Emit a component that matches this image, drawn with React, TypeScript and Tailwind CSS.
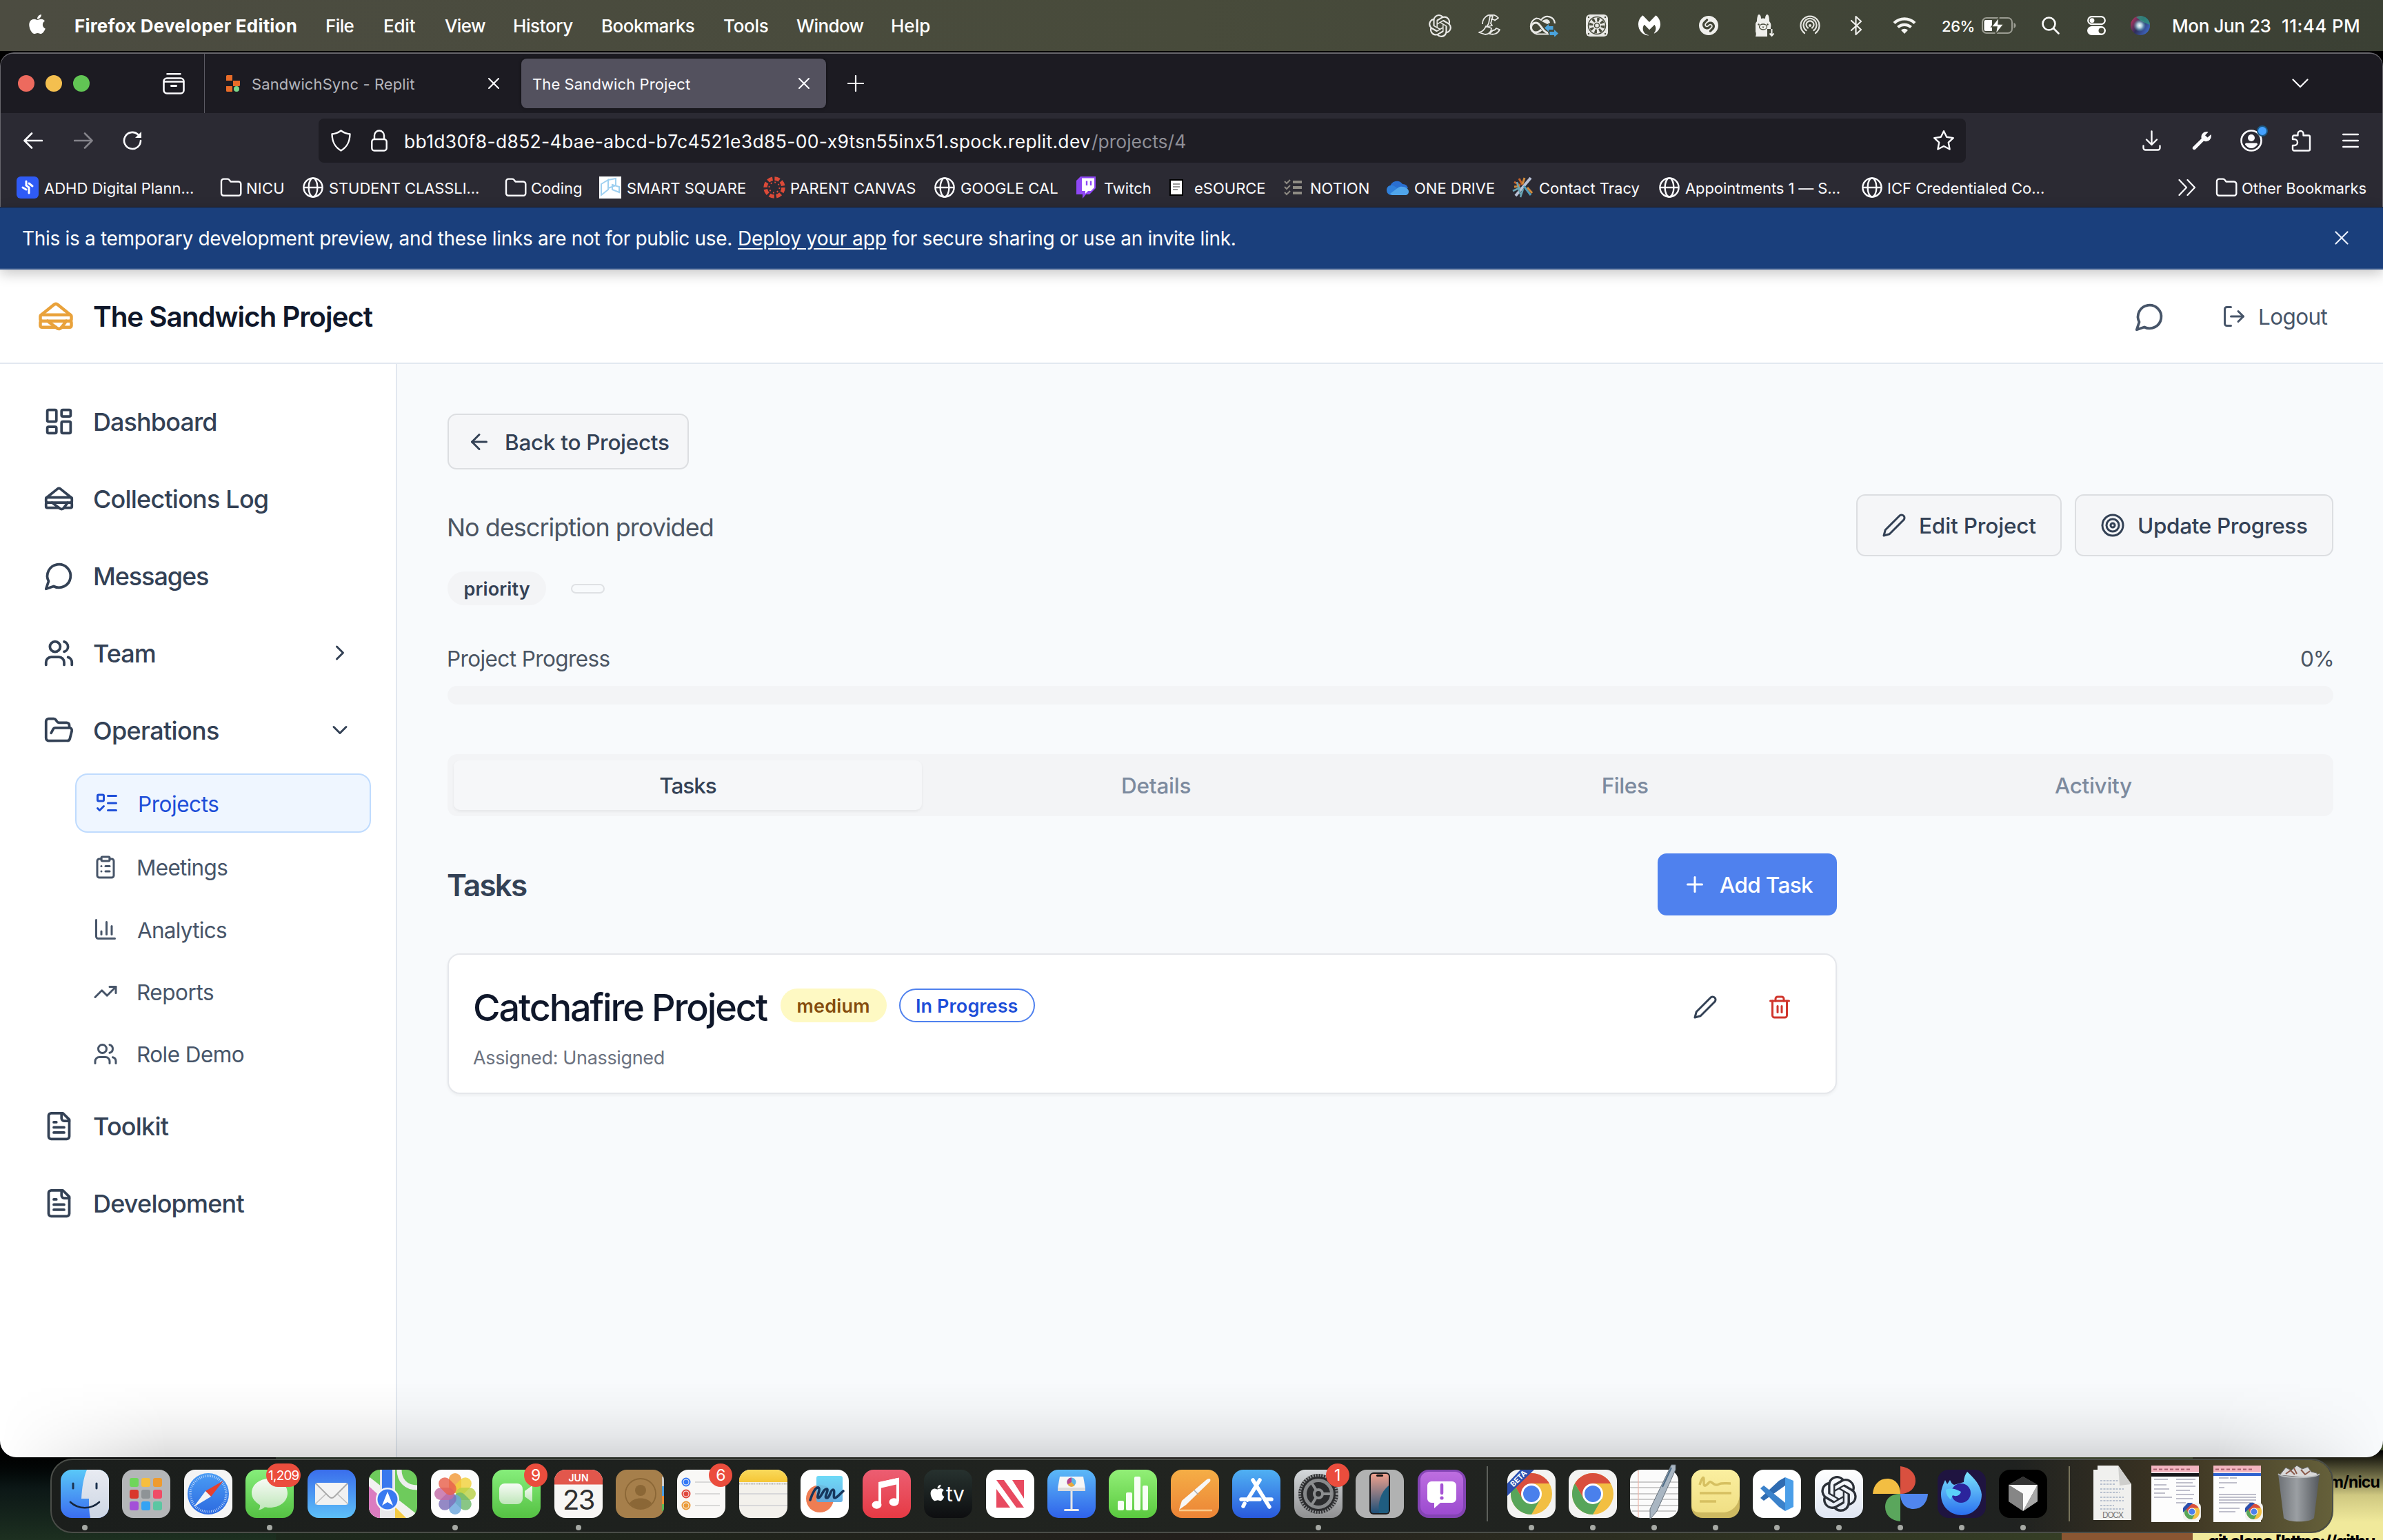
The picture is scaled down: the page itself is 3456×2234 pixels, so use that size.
import { type ReactNode } from "react";
import {
  ArrowLeft, ChartColumn, ChevronDown, ChevronRight, ClipboardList, FolderOpen, LayoutDashboard, ListTodo,
  LogOut, Plus, Sandwich, Target, Trash2, TrendingUp, Users, X,
} from "lucide-react";
import { SiMalwarebytes, SiOpenai, SiShazam } from "react-icons/si";
import { FaApple } from "react-icons/fa";

function T({ className, children }: { className: string; children: ReactNode }) {
  return <span className={"block shrink-0 whitespace-nowrap pt-0.5 leading-none " + className}>{children}</span>;
}

function Globe({ className = "" }: { className?: string }) {
  return (
    <svg className={"size-8 shrink-0 " + className} viewBox="0 0 32 32" fill="none" stroke="#fbfbfe" strokeWidth="2.4">
      <circle cx="16" cy="16" r="13.6" />
      <ellipse cx="16" cy="16" rx="6.4" ry="13.6" />
      <path d="M3 16h26" />
    </svg>
  );
}
function Folder({ className = "" }: { className?: string }) {
  return (
    <svg className={"size-8 shrink-0 " + className} viewBox="0 0 32 32" fill="none" stroke="#fbfbfe" strokeWidth="2.4" strokeLinejoin="round">
      <path d="M2 24V7a3.400 3.400 0 0 1 3.400-3.400h5.600c1.300 0 2 .6 2.800 1.700L15.500 7.500H27A3.400 3.400 0 0 1 30.300 11v13.500a3.200 3.200 0 0 1-3.300 3.200H5.300A3.300 3.300 0 0 1 2 24z" />
    </svg>
  );
}
function Stroke({ className = "", children }: { className?: string; children: ReactNode }) {
  return (
    <svg className={"shrink-0 " + className} viewBox="0 0 24 24" fill="none" stroke="currentColor" strokeWidth="2" strokeLinecap="round" strokeLinejoin="round">
      {children}
    </svg>
  );
}
function FileText({ className = "" }: { className?: string }) {
  return (
    <Stroke className={className}>
      <path d="M15 2H6a2 2 0 0 0-2 2v16a2 2 0 0 0 2 2h12a2 2 0 0 0 2-2V7Z" />
      <path d="M14 2v4a2 2 0 0 0 2 2h4M10 9H8M16 13H8M16 17H8" />
    </Stroke>
  );
}
function Pen({ className = "" }: { className?: string }) {
  return <Stroke className={className}><path d="M17 3a2.850 2.830 0 1 1 4 4L7.500 20.500 2 22l1.500-5.500Z" /></Stroke>;
}
function Bubble({ className = "" }: { className?: string }) {
  return <Stroke className={className}><path d="M7.900 20A9 9 0 1 0 4 16.100L2 22Z" /></Stroke>;
}

function MenuBar() {
  return (
    <div className="flex h-[74px] shrink-0 items-center bg-linear-to-r from-[#4c4c41] via-[#484b3b] to-[#3b4034] pl-[41px] text-[26px] font-medium text-white">
      <FaApple className="mb-1 h-8 w-[26px] shrink-0" />
      <T className="ml-[41px] w-[322px] font-bold tracking-[0.2px]">Firefox Developer Edition</T>
      <T className="ml-[42px] w-[41px] tracking-[-0.6px]">File</T>
      <T className="ml-[43px] w-[46px] tracking-[-0.2px]">Edit</T>
      <T className="ml-[43px] w-[57px] tracking-[-0.6px]">View</T>
      <T className="ml-[42px] w-[86px] tracking-[-0.4px]">History</T>
      <T className="ml-[42px] w-[134px] tracking-[-0.5px]">Bookmarks</T>
      <T className="ml-[43px] w-[63px] tracking-[-0.3px]">Tools</T>
      <T className="ml-[43px] w-[95px] tracking-[-0.6px]">Window</T>
      <T className="ml-[42px] w-[56px]">Help</T>
      <SiOpenai className="ml-[724px] size-[33px] shrink-0 text-[#e9e9e6]" />
      <svg className="ml-[39px] size-8 shrink-0" viewBox="0 0 32 32" fill="none" stroke="#e9e9e6" strokeWidth="1.800" strokeLinejoin="round">
        <path d="M6 14A13 13 0 0 1 29 5l-5 3.500a7.500 7.500 0 0 0-6-1.500M31 22c-3 6-9 8-15 6l5-5c2 0 4-1 5-3zM17 2h4l-3 11 2 3-8 2 3-5zM11 17l8 3c0 5-4 9-9 9l-9-3c5-1 8-4 10-9z" />
      </svg>
      <svg className="ml-10 h-8 w-[44px] shrink-0" viewBox="0 0 44 32" fill="none" stroke="#e9e9e6" strokeWidth="2.200">
        <path d="M30 28.500H13A12 12 0 0 1 12 5.500c3 0 5 .8 7 2.500C26-1 38 3 39 13" />
        <path d="M29 27c-5-1-7-5-10-9s-4-6-7.500-6a6.800 6.800 0 0 0 0 14c4 0 6-2 8-4" strokeWidth="3" />
        <path d="M20 10c6-5 11-3 12 2l-4 2z" fill="#e9e9e6" stroke="none" />
        <path d="M24 19.500l6-5.500v3h6.500v5H30v3zM44 27.500l-6-5.500v3h-6.500v5H38v3z" fill="#4aa3dc" stroke="none" />
      </svg>
      <svg className="ml-10 size-8 shrink-0" viewBox="0 0 32 32">
        <rect width="32" height="32" rx="6" fill="#e9e9e6" />
        <circle cx="16" cy="16" r="12.500" fill="none" stroke="#474a3b" strokeWidth="1.500" />
        <circle cx="16" cy="16" r="8.500" fill="none" stroke="#474a3b" strokeWidth="5.500" strokeDasharray="3.200 3.475" />
        <circle cx="16" cy="16" r="3.500" fill="none" stroke="#474a3b" strokeWidth="1.500" />
        <g fill="#474a3b"><circle cx="4" cy="4" r="1.200" /><circle cx="28" cy="4" r="1.200" /><circle cx="4" cy="28" r="1.200" /><circle cx="28" cy="28" r="1.200" /></g>
      </svg>
      <SiMalwarebytes className="ml-[44px] size-8 shrink-0" />
      <SiShazam className="ml-[56px] size-7 shrink-0 text-[#efefec]" />
      <svg className="ml-[54px] h-8 w-7 shrink-0" viewBox="0 0 28 32">
        <path d="M0 32c1-3 1-5 0-7-1-2-1-4 0-6-1-4 0-7 2-9C2 5 3 0 5 0s3 3 3 6c2-.8 4-.8 6 0 0-3 1-6 3-6s3 5 3 10c2 2 3 5 2 9v2h-5v11z" fill="#efefec" />
        <ellipse cx="11" cy="18" rx="5.500" ry="4" fill="none" stroke="#474a3b" strokeWidth="1.300" />
        <circle cx="4.500" cy="14.500" r="1.200" fill="#474a3b" /><circle cx="17.500" cy="14.500" r="1.200" fill="#474a3b" /><path d="M9.800 17.500l1.200 1 1.200-1M11 18.500v1.500" stroke="#474a3b" fill="none" />
        <path d="M23.500 21v10M20.500 27.500l3 3.500 3-3.500" fill="none" stroke="#efefec" strokeWidth="2" />
      </svg>
      <svg className="ml-9 h-[30px] w-[30px] shrink-0" viewBox="0 0 30 30" fill="none" stroke="#e4e4df" strokeWidth="2.200" strokeLinecap="round">
        <path d="M7 26A13.500 13.500 0 1 1 23 26M9.500 22A9.500 9.500 0 1 1 20.500 22M12 18.500a5.500 5.500 0 1 1 6 0" />
        <circle cx="15" cy="15" r="2" fill="#e4e4df" stroke="none" />
      </svg>
      <svg className="ml-[43px] h-[30px] w-[18px] shrink-0" viewBox="0 0 18 30" fill="none" stroke="#efefec" strokeWidth="2.200" strokeLinejoin="round" strokeLinecap="round">
        <path d="M2 8l14 13-7.500 7V2L16 9 2 22" />
      </svg>
      <svg className="ml-[44px] h-[26px] w-[34px] shrink-0" viewBox="0 0 34 26" fill="none" stroke="#f4f4f1" strokeWidth="4.200">
        <path d="M2 9.500a21.500 21.500 0 0 1 30 0M7.500 15.500a14 14 0 0 1 19 0" />
        <path d="M17 25l-5-5.300a7.300 7.300 0 0 1 10 0z" fill="#f4f4f1" stroke="none" />
      </svg>
      <T className="ml-[37px] w-[47px] text-[22px] tracking-[-0.4px]">26%</T>
      <svg className="ml-[11px] h-6 w-[50px] shrink-0" viewBox="0 0 50 24">
        <rect x="1" y="1" width="43" height="22" rx="6" fill="none" stroke="#9b9c92" strokeWidth="2" />
        <path d="M46.500 8v8c2-.8 3-2.200 3-4s-1-3.200-3-4z" fill="#9b9c92" />
        <path d="M6 4h9v16H6a2.500 2.500 0 0 1-2.500-2.500v-11A2.500 2.500 0 0 1 6 4z" fill="#fff" />
        <path d="M25 0L14 14h8l-2 11 12-15h-8z" fill="#fff" stroke="#464a3a" strokeWidth="1.500" />
      </svg>
      <svg className="ml-[37px] h-[26px] w-[26px] shrink-0" viewBox="0 0 26 26" fill="none" stroke="#fff" strokeWidth="2.600" strokeLinecap="round">
        <circle cx="10.500" cy="10.500" r="9" /><path d="M17.500 17.500l7 7" />
      </svg>
      <svg className="ml-10 h-[28px] w-[27px] shrink-0" viewBox="0 0 27 28">
        <rect x="1.200" y="1.200" width="24.600" height="11" rx="5.500" fill="none" stroke="#fff" strokeWidth="2.200" /><circle cx="7" cy="6.700" r="3.400" fill="#fff" />
        <rect y="15" width="27" height="13" rx="6.500" fill="#fff" /><circle cx="20.500" cy="21.500" r="4" fill="#454839" />
      </svg>
      <svg className="ml-9 size-7 shrink-0" viewBox="0 0 28 28">
        <defs>
          <linearGradient id="siri" x1="0" y1="0.200" x2="1" y2="0.800"><stop offset="0" stopColor="#b8345e" /><stop offset="0.450" stopColor="#2f2f5c" /><stop offset="1" stopColor="#3f6fd0" /></linearGradient>
          <radialGradient id="siriglow"><stop offset="0" stopColor="#fff" /><stop offset="0.400" stopColor="#bfe3ee" stopOpacity="0.850" /><stop offset="1" stopColor="#58b8c0" stopOpacity="0" /></radialGradient>
        </defs>
        <circle cx="14" cy="14" r="14" fill="url(#siri)" /><path d="M14 0a14 14 0 0 1 14 13C22 11 15 8 8 2a14 14 0 0 1 6-2z" fill="#2f9a80" fillOpacity="0.750" /><circle cx="13" cy="14" r="9" fill="url(#siriglow)" />
      </svg>
      <T className="ml-[32px] w-[143px] tracking-[-0.4px]">Mon Jun 23</T>
      <T className="ml-[16px] w-[113px] tracking-[0.400px]">11:44 PM</T>
    </div>
  );
}

function TabBar() {
  return (
    <div className="flex h-[86px] items-center bg-[#1c1b22] pl-[25px] text-[22px] text-[#fbfbfe]">
      <span className="size-6 rounded-full bg-[#ed6a5e]" />
      <span className="ml-4 size-6 rounded-full bg-[#f4bf4f]" />
      <span className="ml-4 size-6 rounded-full bg-[#61c554]" />
      <svg className="ml-[106px] h-8 w-8" viewBox="0 0 32 32" fill="none" stroke="#fbfbfe" strokeWidth="2.600" strokeLinecap="round">
        <rect x="1.500" y="8.500" width="29" height="22" rx="4.500" /><path d="M2 13.500h28M6.500 2.200h19" /><path d="M12.500 19.500h7" strokeWidth="3" />
      </svg>
      <span className="ml-7 h-[86px] w-px bg-[#5b5a63]" />
      <svg className="ml-[31px] h-6 w-5 shrink-0" viewBox="0 0 20 24">
        <path d="M0 1.500A1.500 1.500 0 0 1 1.500 0H9v8H0zM10 8h10v6.500A1.500 1.500 0 0 1 18.500 16H10zM0 16h9v8H1.500A1.500 1.500 0 0 1 0 22.500z" fill="#e96c28" />
        <circle cx="15" cy="20" r="4" fill="#7bd88a" />
      </svg>
      <T className="ml-[17px] w-[235px] tracking-[0.100px] text-[#b5b5bb]">SandwichSync - Replit</T>
      <X className="ml-[102px] size-[28px] shrink-0" strokeWidth={1.800} />
      <div className="ml-[26px] flex h-[72px] w-[442px] shrink-0 items-center rounded-lg bg-[#53515e] pr-[18px] pl-[16px] shadow-[0_0_4px_rgba(0,0,0,0.5)]">
        <T className="mr-auto w-[228px] tracking-[0.100px]">The Sandwich Project</T>
        <X className="size-[28px]" strokeWidth={1.800} />
      </div>
      <svg className="ml-[31px] size-6 shrink-0" viewBox="0 0 24 24" stroke="#fbfbfe" strokeWidth="2.200" strokeLinecap="round"><path d="M12 1v22M1 12h22" /></svg>
      <svg className="mr-[107px] ml-auto h-[14px] w-6" viewBox="0 0 24 14" fill="none" stroke="#fbfbfe" strokeWidth="2.200" strokeLinecap="round" strokeLinejoin="round"><path d="M1.500 1.500L12 12 22.500 1.500" /></svg>
    </div>
  );
}

function NavBar() {
  return (
    <div className="flex h-[80px] items-center text-[26.500px] text-[#fbfbfe]">
      <svg className="ml-[33px] h-6 w-7 shrink-0" viewBox="0 0 28 24" fill="none" stroke="#fbfbfe" strokeWidth="2.600" strokeLinecap="round" strokeLinejoin="round"><path d="M27 12H2M12 1.500L1.500 12 12 22.500" /></svg>
      <svg className="ml-[45px] h-6 w-7 shrink-0" viewBox="0 0 28 24" fill="none" stroke="#84838a" strokeWidth="2.600" strokeLinecap="round" strokeLinejoin="round"><path d="M1 12h25M16 1.500L26.500 12 16 22.500" /></svg>
      <svg className="ml-[43px] h-7 w-7 shrink-0" viewBox="0 0 28 28" fill="none" stroke="#fbfbfe" strokeWidth="2.600" strokeLinecap="round"><path d="M26 14a12 12 0 1 1-4-9l2 2" /><path d="M27 1v9h-9z" fill="#fbfbfe" stroke="none" /></svg>
      <div className="ml-[256px] flex h-16 w-[2389px] shrink-0 items-center rounded-lg bg-[#1e1d24] pl-[18px]">
        <svg className="h-8 w-[29px] shrink-0" viewBox="0 0 29 32" fill="none" stroke="#fbfbfe" strokeWidth="2.400" strokeLinejoin="round"><path d="M14.500 1.500c4 3 8 4.500 13 5-.3 11-3.500 18.500-13 24-9.500-5.500-12.700-13-13-24 5-.5 9-2 13-5z" /></svg>
        <svg className="ml-[29px] h-8 w-6 shrink-0" viewBox="0 0 24 32" fill="none" stroke="#fbfbfe" strokeWidth="2.400"><rect x="1.300" y="14" width="21.400" height="16.500" rx="3.500" /><path d="M5 14V8.500a7 7 0 0 1 14 0V14" /></svg>
        <T className="ml-[24px] w-[997px] tracking-[0.320px]">bb1d30f8-d852-4bae-abcd-b7c4521e3d85-00-x9tsn55inx51.spock.replit.dev</T>
        <T className="w-[135px] text-[#8f8f97]">/projects/4</T>
        <svg className="mr-4 ml-auto size-8" viewBox="0 0 32 32" fill="none" stroke="#fbfbfe" strokeWidth="2.400" strokeLinejoin="round"><path d="M16 2.200l4.200 8.600 9.600 1.300-7 6.600 1.800 9.800L16 24l-8.600 4.500 1.800-9.800-7-6.600 9.600-1.300z" /></svg>
      </div>
      <svg className="ml-[256px] h-[30px] w-[27px] shrink-0" viewBox="0 0 27 30" fill="none" stroke="#fbfbfe" strokeWidth="2.400" strokeLinecap="round" strokeLinejoin="round"><path d="M13.500 1.500v19M6 13.500l7.500 7.500 7.500-7.500M1.500 22.500v3a3 3 0 0 0 3 3h18a3 3 0 0 0 3-3v-3" /></svg>
      <svg className="ml-[45px] h-7 w-[29px] shrink-0" viewBox="0 0 29 28" fill="#fbfbfe"><path d="M27.500 5l-5 4.500-3.500-3.300L23.500 1.500C19 0 14 3 13.500 8c-.1 1.300 0 2 .3 3L1.500 23a2.500 2.500 0 0 0 0 3.500c1 1.100 2.600 1 3.600 0L17 14.500c6 2.500 12.500-2.500 10.500-9.500z" /></svg>
      <span className="relative ml-[41px] size-8 shrink-0">
        <svg className="size-8" viewBox="0 0 32 32"><circle cx="16" cy="16" r="14.500" fill="none" stroke="#fbfbfe" strokeWidth="2.600" /><circle cx="16" cy="12" r="5" fill="#fbfbfe" /><path d="M7 21.500c0-1.500 1-2 2-2h14c1 0 2 .5 2 2-2 3.500-5.500 5.500-9 5.500s-7-2-9-5.500z" fill="#fbfbfe" /></svg>
        <span className="absolute -top-1.5 left-6 size-4 rounded-full border-2 border-[#1d5a85] bg-[#45a1ff]" />
      </span>
      <svg className="ml-[41px] h-8 w-8 shrink-0" viewBox="0 0 32 32" fill="none" stroke="#fbfbfe" strokeWidth="2.400" strokeLinejoin="round"><path d="M3 13V10.500a2 2 0 0 1 2-2h5.500V6a4 4 0 0 1 8 0v2.500H26a2 2 0 0 1 2 2v18a2 2 0 0 1-2 2H5a2 2 0 0 1-2-2V23h2.500a4 4 0 0 0 0-9H3z" /></svg>
      <svg className="ml-[43px] h-[22px] w-6 shrink-0" viewBox="0 0 24 22" stroke="#fbfbfe" strokeWidth="2.400" strokeLinecap="round"><path d="M1.200 2h21.600M1.200 11h21.600M1.200 20h21.600" /></svg>
    </div>
  );
}

function BookmarksBar() {
  return (
    <div className="flex h-[56px] items-center pl-[23px] text-[22px] text-[#fbfbfe]">
      <svg className="size-8 shrink-0" viewBox="0 0 32 32"><rect width="32" height="32" rx="6" fill="#2f5bf6" /><path d="M14 7v6l4 3v8M9 16l5 3M18 10l5 4" stroke="#fff" strokeWidth="3" strokeLinecap="round" fill="none" /></svg>
      <T className="ml-[8px] w-[217px]">ADHD Digital Plann...</T>
      <Folder className="ml-[38px]" />
      <T className="ml-[6px] w-[55px] tracking-[0.200px]">NICU</T>
      <Globe className="ml-[26px]" />
      <T className="ml-[7px] w-[218px] tracking-[-0.100px]">STUDENT CLASSLI...</T>
      <Folder className="ml-[37px]" />
      <T className="ml-[6px] w-[75px]">Coding</T>
      <svg className="ml-6 size-8 shrink-0" viewBox="0 0 32 32"><rect width="32" height="32" fill="#fff" /><path d="M3 11l10-6v14L3 27zM13 5l11-2v10l-11 4zM19 12l10 3v8l-10-4z" fill="none" stroke="#9fd0f0" strokeWidth="2" /></svg>
      <T className="ml-[8px] w-[173px]">SMART SQUARE</T>
      <svg className="ml-[25px] size-8 shrink-0" viewBox="0 0 32 32" fill="none" stroke="#dc4a38"><circle cx="16" cy="16" r="13" strokeWidth="5.500" strokeDasharray="7.200 3.010" /><circle cx="16" cy="16" r="7.500" strokeWidth="2" strokeDasharray="2 3.890" /></svg>
      <T className="ml-[7px] w-[183px]">PARENT CANVAS</T>
      <Globe className="ml-[25px]" />
      <T className="ml-[7px] w-[141px]">GOOGLE CAL</T>
      <svg className="ml-[27px] h-8 w-7 shrink-0" viewBox="0 0 28 32"><path d="M6 0h22v17l-9 9h-5l-5 6v-6H0V6z" fill="#8f47f5" /><path d="M8 2.500h18v13.500l-5 5h-4l-4 4v-4H8z" fill="#fff" /><path d="M15 6.500v6.500M21 6.500v6.500" stroke="#8f47f5" strokeWidth="2.400" /></svg>
      <T className="ml-3 w-[67px]">Twitch</T>
      <svg className="ml-[28px] h-6 w-5 shrink-0" viewBox="0 0 20 24"><rect x="1" y="1" width="18" height="22" fill="#fff" stroke="#000" strokeWidth="2" /><path d="M5 7h10M5 11h10M5 15h7" stroke="#777" strokeWidth="1.500" /></svg>
      <T className="ml-[16px] w-[103px]">eSOURCE</T>
      <svg className="ml-[27px] h-6 w-[26px] shrink-0" viewBox="0 0 26 24" stroke="#8f8c84" fill="none"><path d="M13 4h13M13 12h13M13 20h13" strokeWidth="4" /><path d="M1 3l3 3 5-5M1 11l3 3 5-5M1 19l3 3 5-5" strokeWidth="2" /></svg>
      <T className="ml-[12px] w-[85px]">NOTION</T>
      <svg className="ml-[26px] h-[22px] w-8 shrink-0" viewBox="0 0 32 22"><path d="M5 10a10 10 0 0 1 18-4 8 8 0 0 1 8 6L16 15z" fill="#2a6fd0" /><path d="M0 15a7 7 0 0 1 11-6l13 8-2 5H7a7 7 0 0 1-7-7z" fill="#2f80db" /><path d="M5 20l12-9c5-3 15 0 15 6 0 3-2 5-5 5H8z" fill="#50a5ea" /></svg>
      <T className="ml-[8px] w-[116px]">ONE DRIVE</T>
      <svg className="ml-[26px] h-8 w-[31px] shrink-0" viewBox="0 0 31 32" strokeWidth="3"><path d="M3 8l9 5M10 3l5 9" stroke="#c6632b" /><path d="M5 28L27 2" stroke="#b9c2d6" strokeWidth="4" /><path d="M17 14l10 13" stroke="#4f9dbd" /><path d="M3 15l8-1M18 2l-3 9M22 16l7 8" stroke="#d08a3c" /><path d="M1 21l11-5M12 30l4-12M7 8l5 18" stroke="#6aa5b5" strokeWidth="2.500" /></svg>
      <T className="ml-[8px] w-[147px]">Contact Tracy</T>
      <Globe className="ml-[26px]" />
      <T className="ml-[7px] w-[225px] tracking-[-0.100px]">Appointments 1 — S...</T>
      <Globe className="ml-[30px]" />
      <T className="ml-[6px] w-[228px]">ICF Credentialed Co...</T>
      <svg className="ml-auto h-6 w-[26px] shrink-0" viewBox="0 0 26 24" fill="none" stroke="#fbfbfe" strokeWidth="2.200" strokeLinecap="round" strokeLinejoin="round"><path d="M1.500 1l10.500 11L1.500 23M13.500 1L24 12 13.500 23" /></svg>
      <Folder className="ml-[28px]" />
      <T className="mr-[23px] ml-[6px] w-[181px]">Other Bookmarks</T>
    </div>
  );
}

function SideItem({ icon, children, chevron }: { icon: ReactNode; children: ReactNode; chevron?: ReactNode }) {
  return (
    <div className="flex h-[90px] items-center pr-[63px] pl-[63px] text-[36px] font-medium text-[#334155]">
      {icon}
      {children}
      {chevron ? <span className="ml-auto">{chevron}</span> : null}
    </div>
  );
}
function SubItem({ icon, children }: { icon: ReactNode; children: ReactNode }) {
  return <div className="flex h-[82px] items-center pl-[135px] text-[31.500px] text-[#475569]">{icon}{children}</div>;
}

function Sidebar() {
  const big = "size-[45px] shrink-0";
  const small = "size-9 shrink-0";
  return (
    <aside className="flex w-[576px] shrink-0 flex-col border-r-2 border-[#e2e8f0] bg-white pt-[38px]">
      <div className="flex flex-col gap-[22px]">
        <SideItem icon={<LayoutDashboard className={big} />}><T className="ml-[27px] w-[179px] tracking-[-0.900px]">Dashboard</T></SideItem>
        <SideItem icon={<Sandwich className={big} />}><T className="ml-[27px] w-[254px] tracking-[-0.800px]">Collections Log</T></SideItem>
        <SideItem icon={<Bubble className={big} />}><T className="ml-[27px] w-[167px] tracking-[-1.100px]">Messages</T></SideItem>
        <SideItem icon={<Users className={big} />} chevron={<ChevronRight className={small} />}><T className="ml-[27px] w-[89px] tracking-[-1px]">Team</T></SideItem>
        <SideItem icon={<FolderOpen className={big} />} chevron={<ChevronDown className={small} />}><T className="ml-[27px] w-[182px] tracking-[-0.650px]">Operations</T></SideItem>
      </div>
      <div className="mt-[18px] ml-[109px] flex h-[86px] w-[429px] items-center rounded-[18px] border-2 border-[#bfdbfe] bg-[#eff6ff] pl-[26px] text-[31.500px] text-[#1d4ed8]">
        <ListTodo className={small} />
        <T className="ml-[27px] w-[116px] pt-1 tracking-[-0.450px]">Projects</T>
      </div>
      <div className="mt-[9px] flex flex-col gap-[8.400px]">
        <SubItem icon={<ClipboardList className={small} />}><T className="ml-[27px] w-[131px] tracking-[-0.700px]">Meetings</T></SubItem>
        <SubItem icon={<ChartColumn className={small} />}><T className="ml-[28px] w-[128px] tracking-[-0.750px]">Analytics</T></SubItem>
        <SubItem icon={<TrendingUp className={small} />}><T className="ml-[27px] w-[111px] tracking-[-0.450px]">Reports</T></SubItem>
        <SubItem icon={<Users className={small} />}><T className="ml-[27px] w-[155px] tracking-[-0.550px]">Role Demo</T></SubItem>
      </div>
      <div className="mt-[18px] flex flex-col gap-[22px]">
        <SideItem icon={<FileText className={big} />}><T className="ml-[27px] w-[107px] tracking-[-0.800px]">Toolkit</T></SideItem>
        <SideItem icon={<FileText className={big} />}><T className="ml-[27px] w-[218px] tracking-[-0.800px]">Development</T></SideItem>
      </div>
    </aside>
  );
}

function Main() {
  const btn = "flex items-center rounded-[13px] border-2 border-[#dcdee1] bg-[#f5f6f8] text-[31.500px] font-medium text-[#334155]";
  return (
    <main className="flex min-w-0 flex-1 flex-col bg-[#f8fafc] pt-[72px] pr-[72px] pl-[73px]">
      <div className={btn + " h-[81px] w-[350px] pl-[26px]"}>
        <ArrowLeft className="size-9" />
        <T className="ml-[19px] w-[239px] tracking-[-0.300px]">Back to Projects</T>
      </div>
      <div className="mt-9 flex h-[90px] items-center">
        <T className="mt-1 mr-auto -ml-px w-[385px] text-[36px] tracking-[-1px] text-[#4b5563]">No description provided</T>
        <div className={btn + " h-[90px] w-[298px] pl-[35px]"}>
          <Pen className="size-9" />
          <T className="ml-[18px] w-[169px] tracking-[-0.150px]">Edit Project</T>
        </div>
        <div className={btn + " ml-[19px] h-[90px] w-[375px] pl-[35px]"}>
          <Target className="size-9" />
          <T className="ml-[18px] w-[246px] tracking-[-0.350px]">Update Progress</T>
        </div>
      </div>
      <div className="mt-[22px] flex items-center">
        <div className="flex h-[49px] w-[143px] items-center justify-center rounded-full bg-[#f3f4f6] text-[27px] font-semibold text-[#334155]"><T className="w-[96px] tracking-[0.100px]">priority</T></div>
        <span className="ml-9 h-[14px] w-[49px] rounded-full border-2 border-[#dfe1e4]" />
      </div>
      <div className="mt-[54px] flex h-[45px] items-center justify-between text-[31.500px] text-[#4b5563]">
        <T className="-ml-px w-[236px] tracking-[-0.600px]">Project Progress</T>
        <T className="w-[48px] tracking-[-1px]">0%</T>
      </div>
      <div className="mt-[18px] h-[27px] rounded-full bg-[#f3f4f6]" />
      <div className="mt-[72px] grid h-[90px] grid-cols-4 rounded-[14px] bg-[#f3f4f6] p-[9px] text-[31.500px] font-medium text-[#7c8a9e]">
        <div className="flex items-center justify-center rounded-[9px] bg-[#f6f7f9] text-[#334155] shadow-[0_2px_4px_rgba(0,0,0,0.06)]"><T className="w-[83px] tracking-[-1px]">Tasks</T></div>
        <div className="flex items-center justify-center"><T className="w-[102px] tracking-[-0.200px]">Details</T></div>
        <div className="flex items-center justify-center"><T className="w-[67px] tracking-[-0.400px]">Files</T></div>
        <div className="flex items-center justify-center"><T className="w-[111px] tracking-[-0.300px]">Activity</T></div>
      </div>
      <div className="mt-[54px] flex h-[90px] w-[2015px] items-center justify-between">
        <T className="-ml-px w-[117px] text-[44px] font-semibold tracking-[-1.800px] text-[#334155]">Tasks</T>
        <div className="flex h-[90px] w-[260px] items-center rounded-[13px] bg-[#4f81ee] pl-9 text-[31.500px] font-medium text-white">
          <Plus className="size-9" />
          <T className="ml-[18px] w-[135px] tracking-[-0.650px]">Add Task</T>
        </div>
      </div>
      <div className="mt-[55px] h-[204px] w-[2015px] rounded-[18px] border-2 border-[#e5e7eb] bg-white pt-[49px] pl-[35px] shadow-[0_2px_4px_rgba(0,0,0,0.05)]">
        <div className="flex h-[49px] items-center pr-[63px]">
          <T className="mt-1 w-[428px] text-[54px] font-medium tracking-[-2.150px] text-[#0f172a]">Catchafire Project</T>
          <div className="ml-[18px] flex h-[49px] w-[154px] items-center justify-center rounded-full bg-[#fef9c3] text-[27px] font-semibold text-[#854d0e]"><T className="w-[107px] tracking-[0.200px]">medium</T></div>
          <div className="ml-[18px] flex h-[49px] w-[197px] items-center justify-center rounded-full border-2 border-[#4f81ee] text-[27px] font-semibold text-[#1d4ed8]"><T className="w-[149px] tracking-[0.100px]">In Progress</T></div>
          <Pen className="mt-1 ml-auto size-9 text-[#334155]" />
          <Trash2 className="mt-1 ml-[72px] size-9 text-[#d0352c]" />
        </div>
        <T className="mt-[36px] w-[278px] text-[27px] tracking-[-0.350px] text-[#6b7280]">Assigned: Unassigned</T>
      </div>
    </main>
  );
}

function Tile({ className = "", children, badge, dot, wide }: { className?: string; children?: ReactNode; badge?: string; dot?: boolean; wide?: boolean }) {
  return (
    <div className="relative size-[70px] shrink-0">
      <svg viewBox="0 0 70 70" className={"size-[70px] " + (wide ? "overflow-visible " : "rounded-[16px] ") + className}>{children}</svg>
      {badge ? (
        <span className={"absolute -top-[9px] flex h-[34px] items-center justify-center rounded-full bg-[#eb4d3d] leading-none text-white " + (badge.length > 1 ? "-right-[10px] w-[50px] text-[19px] tracking-[-0.800px]" : "-right-[10px] w-[34px] text-[23px]")}>{badge}</span>
      ) : null}
      {dot ? <span className="absolute top-[80px] left-[31px] size-2 rounded-full bg-[#a6a9a4]" /> : null}
    </div>
  );
}

function ChromeMark() {
  return (
    <g>
      <circle cx="35" cy="35" r="30" fill="#f2bf42" />
      <path d="M35 20h26A30 30 0 0 0 9 20l13 22.500z" fill="#d94f3d" />
      <path d="M9 20A30 30 0 0 0 35 65l13-22.500-13-7.500-13 7.500z" fill="#57a55a" />
      <circle cx="35" cy="35" r="15" fill="#fff" /><circle cx="35" cy="35" r="12" fill="#4a80ec" />
    </g>
  );
}
function Grad({ id, a, b }: { id: string; a: string; b: string }) {
  return <linearGradient id={id} x1="0" y1="0" x2="0" y2="1"><stop offset="0" stopColor={a} /><stop offset="1" stopColor={b} /></linearGradient>;
}
const petals = ["#f29a38", "#f1d13c", "#b8d146", "#6fb96b", "#6ba6dc", "#7d6fb8", "#c26aa6", "#e8604c"];
const pads = ["#6fd65a", "#f6be3e", "#ee9b2f", "#d9372c", "#8e9396", "#ef4c66", "#a34fd8", "#35a3f3", "#5cc6a2"];

function Dock() {
  return (
    <div className="relative ml-[73px] flex h-[108px] w-[3311px] items-center rounded-[32px] border-2 border-[#4a4d48] bg-linear-to-r from-[#1b1e1c] via-[#212420] to-[#1f2120] pb-[6px] pl-[13px]">
      <div className="absolute inset-y-0 right-0 w-[460px] rounded-r-[30px] bg-linear-to-r from-transparent via-[#3c3422] to-[#65603a]" />
      <div className="relative flex gap-[19.450px]">
        <Tile dot>
          <defs><Grad id="fi" a="#5ac8f8" b="#3a6df0" /><Grad id="fr" a="#e8ebf2" b="#cdd6e4" /></defs>
          <rect width="70" height="70" fill="url(#fi)" /><path d="M38 0h32v70H43c-2-9-2-18-2-28H30C31 26 33 12 38 0z" fill="url(#fr)" />
          <path d="M18 20v7M52 20v7" stroke="#1c3350" strokeWidth="3" strokeLinecap="round" /><path d="M14 47c12 11 30 11 42 0" stroke="#16263c" strokeWidth="2.600" fill="none" strokeLinecap="round" />
        </Tile>
        <Tile>
          <rect width="70" height="70" fill="#b4b6b8" />
          {pads.map((c, i) => <rect key={c} x={11 + (i % 3) * 17} y={12 + Math.floor(i / 3) * 17} width="13" height="13" rx="3" fill={c} />)}
        </Tile>
        <Tile>
          <defs><Grad id="sa" a="#4a9cf4" b="#2c6ae0" /></defs>
          <rect width="70" height="70" fill="#f4f4f4" /><circle cx="35" cy="35" r="30" fill="url(#sa)" /><circle cx="35" cy="35" r="26" fill="none" stroke="#cfe2fa" strokeWidth="3.500" strokeDasharray="0.800 1.920" />
          <path d="M57 16L31 31l8 8z" fill="#e5402f" /><path d="M14 54l25-15-8-8z" fill="#f4f4f4" />
        </Tile>
        <Tile badge="1,209" dot>
          <defs><Grad id="me" a="#86ee7b" b="#55c143" /><Grad id="mb" a="#f7fbf6" b="#bfe6b9" /></defs>
          <rect width="70" height="70" fill="url(#me)" /><path d="M35 13c15 0 26 9 26 21S50 55 35 55c-3 0-5 0-7-.7-2 2-6 4-9 4 2-2.500 2.500-5 2-7C14 47 9 41 9 34c0-12 11-21 26-21z" fill="url(#mb)" />
        </Tile>
        <Tile>
          <defs><Grad id="ml" a="#3a6eec" b="#5dc0f8" /></defs>
          <rect width="70" height="70" fill="url(#ml)" /><rect x="11" y="19" width="48" height="32" rx="4" fill="#f1f1f1" /><path d="M11 50l17-16M59 50L42 34" stroke="#bdbdbd" strokeWidth="1.500" /><path d="M12 20l19 19c2.500 2.500 5.500 2.500 8 0l19-19" fill="#f4f4f4" stroke="#a9a9a9" strokeWidth="1.800" />
        </Tile>
        <Tile>
          <rect width="70" height="70" fill="#6ecb5c" /><path d="M0 10l70 55v5H0z" fill="#f2f2f0" /><path d="M0 24l22 20v26H0z" fill="#db7cc0" /><path d="M36 52l18 18H36z" fill="#f4cb45" /><path d="M16 0h22v70H16z" fill="#e8e8ea" /><path d="M19 0h15v40H19z" fill="#3a78ee" />
          <path d="M44 0c0 16 10 26 26 26" stroke="#eee" strokeWidth="7" fill="none" /><circle cx="27" cy="43" r="17" fill="#f4f6fa" /><circle cx="27" cy="43" r="14.500" fill="#3979f0" /><path d="M27 32l8 20-8-5-8 5z" fill="#fff" />
        </Tile>
        <Tile dot>
          <rect width="70" height="70" fill="#fdfdfd" />
          {petals.map((c, i) => <rect key={c} x="26" y="5" width="18" height="29" rx="9" fill={c} fillOpacity="0.820" transform={"rotate(" + i * 45 + " 35 35)"} />)}
        </Tile>
        <Tile badge="9">
          <rect width="70" height="70" fill="url(#me)" /><rect x="10" y="20" width="34" height="30" rx="8" fill="url(#mb)" /><path d="M47 31l11-8v24l-11-8z" fill="url(#mb)" />
        </Tile>
        <Tile dot>
          <rect width="70" height="70" fill="#f7f6f4" /><rect width="70" height="21.500" fill="#e2574c" />
          <text x="35" y="17" textAnchor="middle" fontSize="14" fontWeight="600" fill="#fff" fontFamily="Inter">JUN</text><text x="35" y="58" textAnchor="middle" fontSize="40" fill="#2e2e2e" fontFamily="Inter" letterSpacing="-1.500">23</text>
        </Tile>
        <Tile>
          <rect width="70" height="70" fill="#a67f4b" /><path d="M67 10h3v14h-3z" fill="#ccc" /><path d="M67 24h3v14h-3z" fill="#4a9be0" /><path d="M67 38h3v12h-3z" fill="#e88b34" /><path d="M67 50h3v10h-3z" fill="#5cb855" />
          <circle cx="36" cy="35" r="22" fill="none" stroke="#8b6736" strokeWidth="1.800" /><circle cx="36" cy="30" r="8" fill="#8b6736" /><path d="M20 49c5-10 27-10 32 0-8 10-24 10-32 0z" fill="#8b6736" />
        </Tile>
        <Tile badge="6">
          <rect width="70" height="70" fill="#f9f8f6" /><g strokeWidth="2" fill="none"><circle cx="13" cy="18" r="5.500" stroke="#3478f6" /><circle cx="13" cy="35" r="5.500" stroke="#e0483e" /><circle cx="13" cy="52" r="5.500" stroke="#ea9a38" /></g><circle cx="13" cy="18" r="3.500" fill="#3478f6" /><circle cx="13" cy="35" r="3.500" fill="#e0483e" /><circle cx="13" cy="52" r="3.500" fill="#ea9a38" /><path d="M26 18h36M26 35h36M26 52h36" stroke="#b9b9b9" strokeWidth="1.200" />
        </Tile>
        <Tile>
          <defs><Grad id="no" a="#f9da5c" b="#f5c636" /></defs>
          <rect width="70" height="70" fill="#f3f1ec" /><rect width="70" height="18" fill="url(#no)" /><path d="M0 20.500h70" stroke="#aaa" strokeWidth="2" strokeDasharray="1.200 1.200" /><path d="M0 35h70M0 52h70" stroke="#cfcfd2" strokeWidth="1.500" />
        </Tile>
        <Tile>
          <defs><Grad id="fb" a="#5fd6f6" b="#58a9e4" /></defs>
          <rect width="70" height="70" fill="#fff" /><circle cx="28" cy="42" r="20" fill="#ef7d53" /><rect x="23" y="9" width="38" height="38" rx="3" fill="url(#fb)" fillOpacity="0.900" /><path d="M14 44c3-10 8-19 12-18 4 2-4 15 0 15s7-14 12-13c4 1-5 13 0 13s5-12 9-12-1 13 3 12 9-8 12-10" fill="none" stroke="#17365c" strokeWidth="3.600" strokeLinecap="round" />
        </Tile>
        <Tile>
          <defs><Grad id="mu" a="#ec5e72" b="#e63a44" /></defs>
          <rect width="70" height="70" fill="url(#mu)" /><path d="M25 50V20l26-6v32" fill="none" stroke="#fff" strokeWidth="4" /><path d="M23 18l28-6v9l-26 6z" fill="#fff" /><ellipse cx="20.500" cy="51" rx="7" ry="5.800" fill="#fff" /><ellipse cx="45.500" cy="47" rx="7" ry="5.800" fill="#fff" />
        </Tile>
        <Tile>
          <defs><Grad id="tv" a="#27322f" b="#0d0e10" /></defs>
          <rect width="70" height="70" fill="url(#tv)" /><FaApple x={6} y={20} size={27} color="#fff" /><text x="32" y="46" fontSize="30" fill="#fff" fontFamily="Inter" letterSpacing="-0.500">tv</text>
        </Tile>
        <Tile>
          <rect width="70" height="70" fill="#fff" /><path d="M15 15h11l29 40H44L15 15z" fill="#e84a60" /><path d="M15 28l20 27H15zM38 15h17v27z" fill="#e84a60" />
        </Tile>
        <Tile>
          <defs><Grad id="ke" a="#5cb9f7" b="#2f62ea" /></defs>
          <rect width="70" height="70" fill="url(#ke)" /><path d="M18 10h34l3 17H15z" fill="#f6f6f6" /><rect x="15" y="26" width="40" height="5" fill="#dcdcdc" /><path d="M35 31v27" stroke="#e6e6e6" strokeWidth="3" /><rect x="24" y="57" width="22" height="3" rx="1.500" fill="#eee" /><circle cx="35" cy="18" r="6.500" fill="#5fb7e8" /><path d="M35 18v-6.500a6.500 6.500 0 0 0-5.500 10z" fill="#b8458c" /><path d="M35 18l-5.500 3.500a6.500 6.500 0 0 0 10 1.500z" fill="#e9a83a" />
        </Tile>
        <Tile>
          <defs><Grad id="nu" a="#92ef77" b="#5ac93f" /></defs>
          <rect width="70" height="70" fill="url(#nu)" /><g fill="#f8fff6"><rect x="13" y="45" width="9" height="14" rx="2" /><rect x="25" y="33" width="9" height="26" rx="2" /><rect x="37" y="10" width="9" height="49" rx="2" /><rect x="49" y="23" width="8" height="36" rx="2" /></g>
        </Tile>
        <Tile>
          <defs><Grad id="pa" a="#f5ae46" b="#ec8436" /></defs>
          <rect width="70" height="70" fill="url(#pa)" /><path d="M12 59h48" stroke="#f9c98a" strokeWidth="2.500" /><path d="M12 58l4-13 34-29c4-4 9-4 7 1L22 51z" fill="#f7f7f7" /><path d="M34 30l6 6" stroke="#aaa" strokeWidth="1.500" />
        </Tile>
        <Tile>
          <defs><Grad id="as" a="#50b1f3" b="#2959dc" /></defs>
          <rect width="70" height="70" fill="url(#as)" /><path d="M30 15l24 39M40 15L22 44M18 49l-2 4M13 43h27M49 43h8" stroke="#fff" strokeWidth="5.500" strokeLinecap="round" />
        </Tile>
        <Tile badge="1" dot>
          <defs><Grad id="se" a="#d5d9dc" b="#8f9091" /></defs>
          <rect width="70" height="70" fill="url(#se)" /><circle cx="35" cy="35" r="29" fill="#2b2c2e" /><circle cx="35" cy="35" r="27" fill="none" stroke="#8c8e90" strokeWidth="4" strokeDasharray="2 1.800" /><circle cx="35" cy="35" r="19.500" fill="none" stroke="#86888a" strokeWidth="5" /><circle cx="35" cy="35" r="6" fill="none" stroke="#8c8e90" strokeWidth="4" /><path d="M40 35h15M32 30l-8-13M32 40l-8 13" stroke="#8c8e90" strokeWidth="4" />
        </Tile>
        <Tile>
          <defs><Grad id="ph" a="#f0a18d" b="#1d4f78" /></defs>
          <rect width="70" height="70" fill="#b1b2b2" /><rect x="20" y="4" width="30" height="61" rx="6" fill="#1a1a1c" /><rect x="22" y="6" width="26" height="57" rx="4" fill="url(#ph)" /><path d="M48 23v36a4 4 0 0 1-4 4H34c-2-15 2-30 14-40z" fill="#1f5d80" /><rect x="30" y="7" width="10" height="3" rx="1.500" fill="#111" />
        </Tile>
        <Tile>
          <defs><Grad id="fe" a="#bd6ee0" b="#9c4bd0" /></defs>
          <rect width="70" height="70" fill="#8444b4" /><rect x="4" y="3" width="62" height="62" rx="12" fill="url(#fe)" /><path d="M20 17h30a6 6 0 0 1 6 6v19a6 6 0 0 1-6 6H33l-9 8v-8h-4a6 6 0 0 1-6-6V23a6 6 0 0 1 6-6z" fill="#fff" /><path d="M35 22v12" stroke="#a552d4" strokeWidth="4.500" strokeLinecap="round" /><circle cx="35" cy="41" r="2.600" fill="#a552d4" />
        </Tile>
      </div>
      <span className="relative ml-[30px] h-20 w-0.5 shrink-0 bg-[#5d605b]" />
      <div className="relative ml-[28px] flex gap-[19.200px]">
        <Tile dot>
          <rect width="70" height="70" fill="#f3f3f2" /><ChromeMark />
          <path d="M19 0h20L0 38V20z" fill="#2c4fae" /><text x="0" y="0" fontSize="11" fontWeight="700" fill="#fff" fontFamily="Inter" transform="translate(9 25.500) rotate(-45)">BETA</text>
        </Tile>
        <Tile dot><rect width="70" height="70" fill="#f3f3f2" /><ChromeMark /></Tile>
        <Tile dot wide>
          <rect width="70" height="70" rx="16" fill="#fbfbfb" /><path d="M0 18h70M0 26h70M0 35h70M0 43h70M0 52h70M3 60h64" stroke="#bcbcbc" strokeWidth="1.300" /><path d="M12 1v68" stroke="#f0b5a8" strokeWidth="1.200" />
          <path d="M60-7l6 0 0 7L39 60 29 72l0-15z" fill="#a9b6c2" stroke="#67727c" strokeWidth="1" /><path d="M60-3L47 25" stroke="#4e6c86" strokeWidth="2" />
        </Tile>
        <Tile dot>
          <defs><Grad id="st" a="#fbefa0" b="#f0df84" /></defs>
          <rect width="70" height="70" fill="#cdb961" /><path d="M0 0h70v38c-2 14-10 22-22 24H12C4 62 0 58 0 50z" fill="url(#st)" /><path d="M12 22c3-10 6-13 6-8s-1 12 4 8 4-6 8-3 6 4 10 2 9-1 17-1M12 34h46M12 46h24" stroke="#d6c061" strokeWidth="3.500" fill="none" />
        </Tile>
        <Tile dot>
          <rect width="70" height="70" fill="#fff" /><path d="M47 11l-9 5L11 41l5 4 31-22z" fill="#2f6cb2" /><path d="M11 27l5-4 31 25v12l-9-6z" fill="#3b82cb" /><path d="M47 11l12 5v38l-12 6z" fill="#4a9ee8" />
        </Tile>
        <Tile dot>
          <defs><Grad id="gp" a="#ffffff" b="#dfe6f2" /></defs>
          <rect width="70" height="70" fill="url(#gp)" /><SiOpenai x={9} y={9} size={52} color="#2b3038" />
        </Tile>
        <Tile dot wide>
          <path d="M35 35V-5c14 2 22 10 22 21S48 35 35 35z" fill="#d9503f" /><path d="M35 35h40c-1 13-9 22-21 22S35 48 35 35z" fill="#5086ee" /><path d="M35 35v40c-13-1-22-9-22-21s9-19 22-19z" fill="#5aa65c" /><path d="M35 35H-5c1-13 9-22 21-22s19 9 19 22z" fill="#f3be42" />
        </Tile>
        <Tile dot>
          <defs><Grad id="ff" a="#7be4fb" b="#2a6ff0" /></defs>
          <rect width="70" height="70" fill="#1f1440" /><path d="M43 3c10 9 20 20 21 33 0 18-13 30-29 30S5 54 5 36c0-8 3-14 6-21l3 6 4-6c2 4 3 6 6 7l14-4c0-6 2-11 5-15z" fill="url(#ff)" /><circle cx="34" cy="34" r="14" fill="#2b249c" /><path d="M12 29c8-3 15-1 22 3-2 7-9 7-12 5l-3 6c-5-4-7-9-7-14z" fill="#5bd0f8" />
        </Tile>
        <Tile dot>
          <rect width="70" height="70" fill="#000" /><path d="M35 10l21 12v24L35 60 14 46V22z" fill="#6b6b6b" /><path d="M35 10l21 12H14z" fill="#333" /><path d="M14 22h42L35 60V35z" fill="#fafafa" /><path d="M56 22v24L35 60z" fill="#a8a8a8" /><path d="M14 22l21 13v25L14 46z" fill="#868686" />
        </Tile>
      </div>
      <span className="relative ml-[31px] h-20 w-0.5 shrink-0 bg-[#77735a]" />
      <svg className="relative ml-[34px] h-[82px] w-[57px] shrink-0" viewBox="0 0 57 82">
        <path d="M6 0h30l19 27v52H0V6h6z" fill="#f0f0ee" /><path d="M36 0l19 27-17 2z" fill="#cfcfcd" />
        <g stroke="#a5b1c5" strokeWidth="1.500" strokeDasharray="3 1.500"><path d="M10 22h26M10 27h22M10 34h34M10 39h28M10 46h34M10 51h34M10 58h20M10 63h34" /></g>
        <text x="13" y="76" fontSize="12" fill="#777" fontFamily="Inter" textLength="31">DOCX</text>
      </svg>
      {[0, 1].map((n) => (
        <svg key={n} className={"relative h-[82px] w-[72px] shrink-0 " + (n ? "ml-[18px]" : "ml-[27px]")} viewBox="0 0 72 82">
          <rect width="69" height="82" fill="#fdfdfd" /><rect width="69" height="10" fill="#f2b5c0" /><path d="M3 5.500h56" stroke="#a9606f" strokeWidth="2" strokeDasharray="5 3" />
          {n ? <rect y="11" width="69" height="4" fill="#2f62cf" /> : <rect y="11" width="69" height="5" fill="#15161a" />}
          {n ? <g stroke="#aab" strokeWidth="1.300"><path d="M8 18h14M24 18h10M8 25h26M8 32h8M8 42h54M8 46h54M8 50h54M8 54h50M8 62h30M8 67h24" /></g> : <g stroke="#aab" strokeWidth="1.300"><path d="M4 20h20M4 28h18M4 34h22M4 40h16M36 20h28M36 25h24M36 30h28M36 36h20M36 42h26M36 48h24M36 54h14M4 46h26" /></g>}
          <g transform="translate(46 54) scale(0.370)"><rect width="70" height="70" rx="16" fill="#f3f3f2" /><ChromeMark /><path d="M19 0h20L0 38V20z" fill="#2c4fae" /></g>
        </svg>
      ))}
      <svg className="relative ml-[21px] h-[82px] w-[62px] shrink-0" viewBox="0 0 62 82">
        <defs><linearGradient id="tr"><stop offset="0" stopColor="#6d7176" /><stop offset="0.450" stopColor="#9b9fa3" /><stop offset="1" stopColor="#54585d" /></linearGradient></defs>
        <path d="M3 14L12 3l8 4 8-7 8 5 8-3 5 7 8 2 2 8z" fill="#d9d9d9" stroke="#6b6b6b" strokeWidth="1" /><path d="M12 12l7-5 6 6M34 6l6 7 7-5M24 4l4 8" stroke="#8a5a4a" strokeWidth="2" fill="none" />
        <path d="M1 12c6 7 54 7 60 0l-8 64c-5 7-39 7-44 0z" fill="url(#tr)" /><path d="M1 12c6 7 54 7 60 0" stroke="#b9bcbe" strokeWidth="1.800" fill="none" />
      </svg>
    </div>
  );
}

export default function App() {
  return (
    <div className="relative flex h-[2234px] w-[3456px] flex-col overflow-hidden bg-black font-[Inter,sans-serif]">
      <div className="absolute bottom-0 left-0 h-[150px] w-[3456px] bg-linear-to-r from-[#1a2c1c] via-[#231f1c] to-[#3c4a28]" />
      <div className="absolute bottom-0 left-0 h-[150px] w-[400px] bg-linear-to-b from-black via-[#0c1716] to-[#1d3020]" />
      <div className="absolute bottom-0 left-[2990px] h-5 w-[190px] bg-[#8a5632]" />
      <div className="absolute right-0 bottom-0 flex h-[130px] w-[276px] flex-col items-end overflow-hidden bg-[linear-gradient(to_bottom,#000_0%,#6d6a45_28%,#cfc881_50%,#f0e99b_80%)] text-[23px] font-bold text-black">
        <T className="mt-[33px] w-[78px] tracking-[-0.900px]">m/nicu</T>
      </div>
      <MenuBar />
      <div className="relative mt-0.5 flex h-[2038px] shrink-0 flex-col overflow-hidden rounded-t-[20px] rounded-b-[24px] bg-[#2b2a33]">
        <div className="h-[224px] shrink-0 rounded-t-[20px] border-x border-t-2 border-[#67666c] bg-[#2b2a33]">
          <div className="overflow-hidden rounded-t-[18px]"><TabBar /></div>
          <NavBar />
          <BookmarksBar />
        </div>
        <div className="relative z-10 flex h-[91px] shrink-0 items-center justify-between border-t border-b-2 border-t-[#1c1b22] border-b-[#33548a] bg-[#1a3f7c] pr-[50px] pl-[32px] text-[28px] text-white shadow-[0_6px_18px_rgba(0,0,0,0.22)]">
          <div className="flex">
            <T className="w-[1031px] tracking-[-0.310px]">This is a temporary development preview, and these links are not for public use.</T>
            <T className="ml-[7px] w-[216px] tracking-[-0.100px] underline underline-offset-4">Deploy your app</T>
            <T className="ml-[8px] w-[498px] tracking-[-0.330px]">for secure sharing or use an invite link.</T>
          </div>
          <svg className="size-5" viewBox="0 0 20 20" stroke="#e8eefa" strokeWidth="2.200" strokeLinecap="round"><path d="M1.500 1.500l17 17M18.500 1.500l-17 17" /></svg>
        </div>
        <header className="flex h-[137px] shrink-0 items-center border-b-2 border-[#e2e8f0] bg-white pt-px pl-[54px]">
          <Sandwich className="size-[54px] text-[#e9a23b]" />
          <T className="ml-[27px] w-[405px] text-[40.500px] font-semibold tracking-[-1.100px] text-[#0f172a]">The Sandwich Project</T>
          <Bubble className="ml-auto size-[45px] text-[#475569]" />
          <LogOut className="ml-[82px] size-9 text-[#475569]" />
          <T className="mr-[80px] ml-[17px] w-[101px] text-[31.500px] tracking-[-0.600px] text-[#475569]">Logout</T>
        </header>
        <div className="relative flex min-h-0 flex-1">
          <Sidebar />
          <Main />
          <div className="pointer-events-none absolute inset-x-0 bottom-0 h-[110px] bg-[linear-gradient(to_top,rgba(0,0,0,0.140)_0%,rgba(0,0,0,0.070)_30%,rgba(0,0,0,0.025)_65%,transparent_100%)] [mask-image:linear-gradient(to_right,transparent_0%,black_7%,black_93%,transparent_100%)]" />
        </div>
      </div>
      <div className="relative flex h-[120px] shrink-0 flex-col pt-0.5">
        <Dock />
        <div className="flex h-[10px] justify-end overflow-hidden text-[26px] font-bold text-black">
          <T className="-mt-0.5 w-[254px] tracking-[-1.800px]">git clone [https://githu</T>
        </div>
      </div>
    </div>
  );
}
